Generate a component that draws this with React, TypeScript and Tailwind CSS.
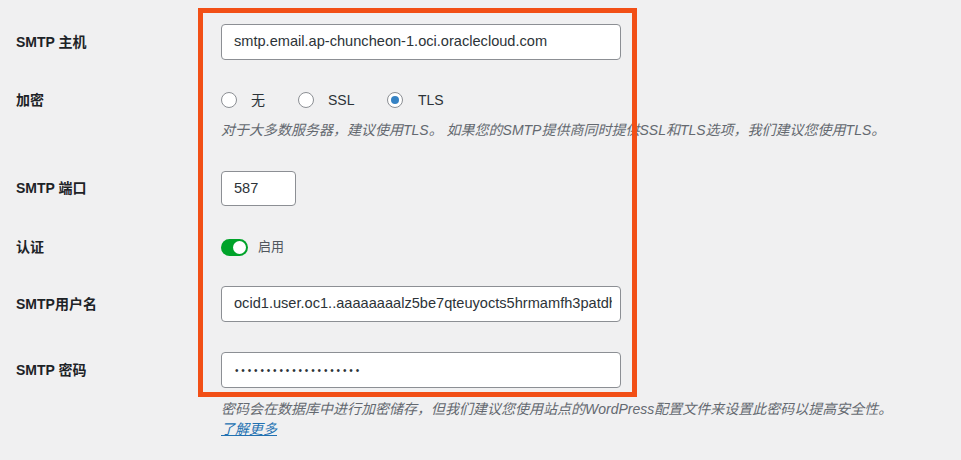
import React from "react";

const font = { fontFamily: '"Liberation Sans", "Noto Sans CJK SC", Arial, sans-serif' };

function Label({ children, h }: { children: React.ReactNode; h: string }) {
  return (
    <div className={`w-[205px] shrink-0 flex items-center text-[14px] font-bold text-[#1d2327] ${h}`}>
      {children}
    </div>
  );
}

function Radio({ checked }: { checked?: boolean }) {
  return (
    <span className="w-4 h-4 rounded-full border border-[#8c8f94] bg-white flex items-center justify-center shrink-0">
      {checked && <span className="w-2 h-2 rounded-full bg-[#3582c4]" />}
    </span>
  );
}

export default function App() {
  return (
    <div
      className="relative w-[961px] h-[460px] bg-[#f0f0f1] overflow-hidden text-[#2c3338]"
      style={font}
    >
      <div className="pl-4 pt-[24px] flex flex-col">
        {/* SMTP host */}
        <div className="flex">
          <Label h="h-[36px]">SMTP 主机</Label>
          <div className="w-[400px] h-[36px] bg-white border border-[#8c8f94] rounded-[4px] flex items-center pl-[12px] text-[14.6px] whitespace-nowrap overflow-hidden">
            smtp.email.ap-chuncheon-1.oci.oraclecloud.com
          </div>
        </div>

        {/* Encryption */}
        <div className="flex mt-[30px]">
          <Label h="h-[20px]">加密</Label>
          <div className="flex flex-col">
            <div className="flex items-center h-[20px] text-[14px]">
              <div className="flex items-center w-[77px]">
                <Radio />
                <span className="ml-[14px]">无</span>
              </div>
              <div className="flex items-center w-[89px]">
                <Radio />
                <span className="ml-[14px]">SSL</span>
              </div>
              <div className="flex items-center">
                <Radio checked />
                <span className="ml-[15px]">TLS</span>
              </div>
            </div>
            <div className="mt-[10px] leading-[20px] text-[14px] italic text-[#646970] whitespace-nowrap">
              对于大多数服务器，建议使用TLS。 如果您的SMTP提供商同时提供SSL和TLS选项，我们建议您使用TLS。
            </div>
          </div>
        </div>

        {/* Port */}
        <div className="flex mt-[31px]">
          <Label h="h-[35px]">SMTP 端口</Label>
          <div className="w-[75px] h-[35px] bg-white border border-[#8c8f94] rounded-[4px] flex items-center pl-[12px] text-[14.6px]">
            587
          </div>
        </div>

        {/* Auth */}
        <div className="flex mt-[31px]">
          <Label h="h-[20px]">认证</Label>
          <div className="flex items-center h-[20px]">
            <div className="w-[27px] h-[17px] rounded-full bg-[#00a32a] flex items-center justify-end pr-[2px]">
              <span className="w-[13px] h-[13px] rounded-full bg-white" />
            </div>
            <span className="ml-[10px] text-[13px] text-[#50575e]">启用</span>
          </div>
        </div>

        {/* Username */}
        <div className="flex mt-[29px]">
          <Label h="h-[36px]">SMTP用户名</Label>
          <div className="w-[400px] h-[36px] bg-white border border-[#8c8f94] rounded-[4px] flex items-center pl-[12px] pr-[8px] text-[14.6px] whitespace-nowrap overflow-hidden">
            <span className="overflow-hidden block">ocid1.user.oc1..aaaaaaaalz5be7qteuyocts5hrmamfh3patdh</span>
          </div>
        </div>

        {/* Password */}
        <div className="flex mt-[30px]">
          <Label h="h-[36px]">SMTP 密码</Label>
          <div className="flex flex-col">
            <div className="w-[400px] h-[36px] bg-white border border-[#8c8f94] rounded-[4px] flex items-center pl-[13px] text-[10px] tracking-[2.85px] whitespace-nowrap overflow-hidden">
              ••••••••••••••••••••
            </div>
            <div className="mt-[11px] leading-[20px] text-[14px] italic text-[#646970] whitespace-nowrap">
              密码会在数据库中进行加密储存，但我们建议您使用站点的WordPress配置文件来设置此密码以提高安全性。
            </div>
            <a className="leading-[20px] text-[14px] italic text-[#2271b1] underline w-fit">了解更多</a>
          </div>
        </div>
      </div>

      {/* annotation box */}
      <div className="absolute left-[198px] top-[8px] w-[439px] h-[389px] border-[5px] border-[#f24f16] pointer-events-none" />
    </div>
  );
}
